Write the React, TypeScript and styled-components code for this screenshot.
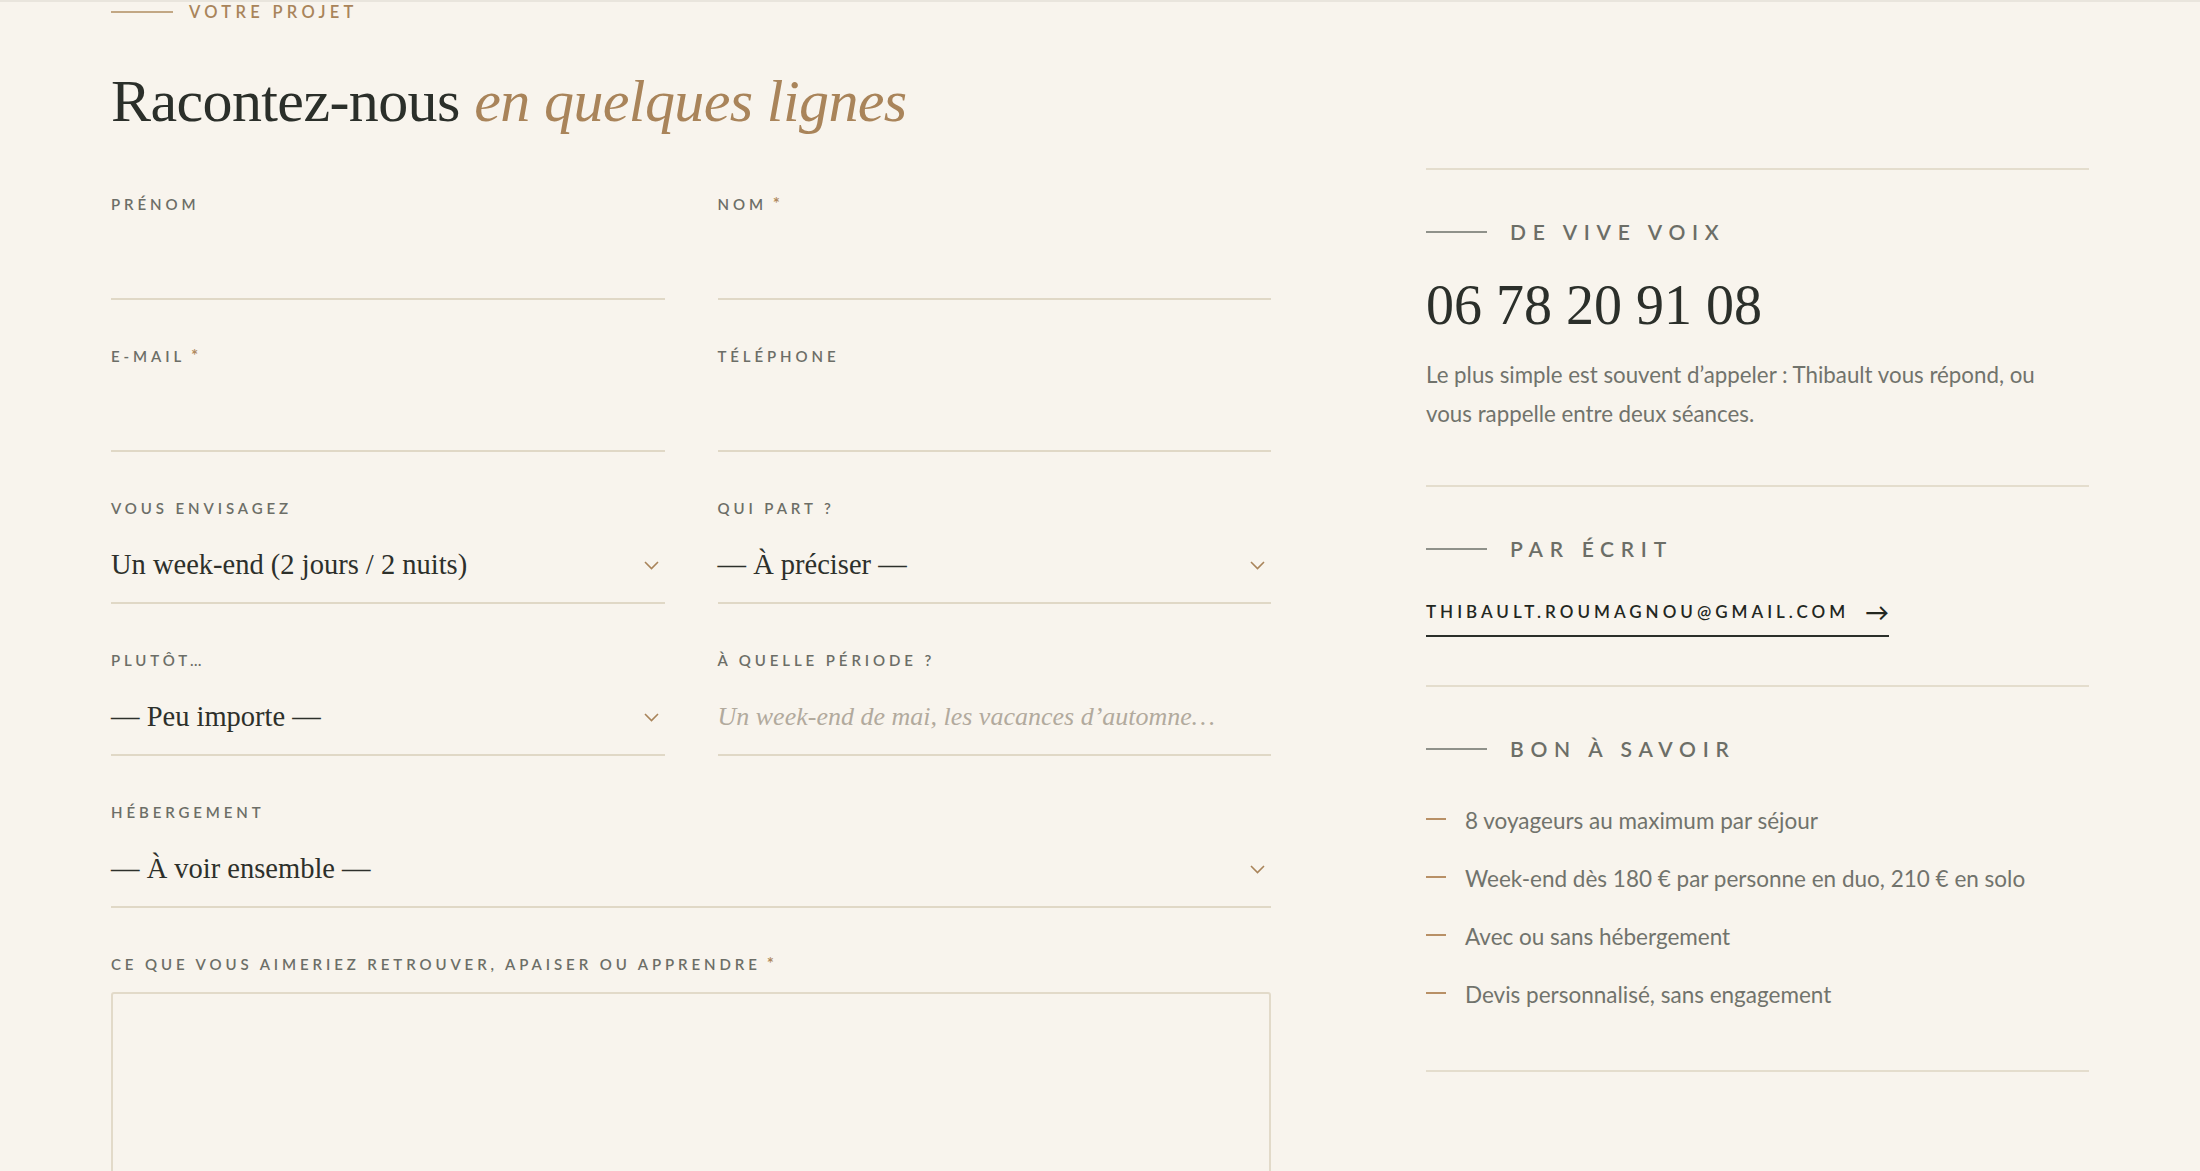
import styled, { createGlobalStyle } from "styled-components";

const serif = `"Liberation Serif", "Times New Roman", serif`;
const sans = `Lato, "Noto Sans", sans-serif`;

const GlobalStyle = createGlobalStyle`
  html, body {
    margin: 0;
    padding: 0;
    background: #f8f4ed;
  }
  * {
    box-sizing: border-box;
  }
`;

const Section = styled.section`
  border-top: 2px solid #e9e5dd;
  padding: 0 111px;
  min-height: 1171px;
  overflow: hidden;
`;

const Layout = styled.div`
  display: grid;
  grid-template-columns: 1160px 663px;
  column-gap: 155px;
  align-items: start;
`;

const Eyebrow = styled.div`
  display: flex;
  align-items: center;
  gap: 16px;
  font-family: ${sans};
  font-size: 16.5px;
  line-height: 20px;
  font-weight: 600;
  letter-spacing: 0.26em;
  text-transform: uppercase;
  color: #a9845a;

  &::before {
    content: "";
    width: 62px;
    height: 1.5px;
    background: #c2a784;
  }
`;

const Heading = styled.h2`
  margin: 43px 0 57px;
  font-family: ${serif};
  font-weight: 400;
  font-size: 60px;
  line-height: 1.2;
  letter-spacing: -0.01em;
  color: #2b2f2a;

  em {
    color: #a9845a;
  }
`;

const FormGrid = styled.form`
  display: grid;
  grid-template-columns: 1fr 1fr;
  column-gap: 53px;
  row-gap: 46px;
`;

const Field = styled.div<{ $wide?: boolean }>`
  display: flex;
  flex-direction: column;
  grid-column: ${(p) => (p.$wide ? "1 / -1" : "auto")};
`;

const Label = styled.label`
  font-family: ${sans};
  font-size: 15px;
  line-height: 20px;
  font-weight: 600;
  letter-spacing: 0.26em;
  text-transform: uppercase;
  color: #6c6e67;

  span {
    color: #b08a5f;
    margin-left: 6px;
    font-size: 17px;
  }
`;

const TextInput = styled.input`
  margin-top: 27px;
  height: 59px;
  padding: 0 0 17px;
  border: none;
  border-bottom: 2px solid #e0d8c6;
  background: transparent;
  font-family: ${serif};
  font-size: 26px;
  line-height: 40px;
  color: #2d302b;
  outline: none;

  &::placeholder {
    font-style: italic;
    color: #b2aa9d;
  }
`;

const SelectBox = styled.div`
  margin-top: 27px;
  height: 59px;
  padding: 0 6px 17px 0;
  border-bottom: 2px solid #e0d8c6;
  display: flex;
  align-items: center;
  justify-content: space-between;
  font-family: ${serif};
  font-size: 28.5px;
  line-height: 40px;
  color: #2d302b;
`;

const TextArea = styled.textarea`
  margin-top: 18px;
  height: 260px;
  border: 2px solid #e2dac9;
  border-radius: 3px;
  background: transparent;
  resize: none;
  outline: none;
`;

const Aside = styled.aside`
  padding-top: 166px;
`;

const Block = styled.div<{ $last?: boolean }>`
  border-top: 2px solid #e4ddcd;
  border-bottom: ${(p) => (p.$last ? "2px solid #e4ddcd" : "none")};
  padding: 48px 0 ${(p) => (p.$last ? "58px" : "48px")};
`;

const BlockTitle = styled.h3`
  margin: 0;
  display: flex;
  align-items: center;
  gap: 23px;
  font-family: ${sans};
  font-size: 21px;
  line-height: 28px;
  font-weight: 600;
  letter-spacing: 0.32em;
  text-transform: uppercase;
  color: #6c6e67;

  &::before {
    content: "";
    width: 61px;
    height: 1.5px;
    background: #8f918a;
  }
`;

const Phone = styled.div`
  margin-top: 27px;
  font-family: ${serif};
  font-size: 56px;
  line-height: 65px;
  color: #2b2f2a;
`;

const Text = styled.p`
  margin: 17px 0 4px;
  max-width: 636px;
  font-family: ${sans};
  font-size: 22.3px;
  line-height: 39px;
  color: #71736c;
`;

const MailLink = styled.a`
  margin-top: 37px;
  display: inline-flex;
  align-items: center;
  gap: 16px;
  padding-bottom: 11px;
  border-bottom: 2px solid #2b2f2a;
  font-family: ${sans};
  font-size: 17px;
  line-height: 24px;
  font-weight: 600;
  letter-spacing: 0.235em;
  color: #23271f;
  text-decoration: none;
`;

const Arrow = styled.span`
  font-size: 24px;
  letter-spacing: 0;
`;

const List = styled.ul`
  margin: 41px 0 0;
  padding: 0;
  list-style: none;
  display: flex;
  flex-direction: column;
  gap: 24px;
`;

const Item = styled.li`
  display: flex;
  align-items: center;
  gap: 19px;
  font-family: ${sans};
  font-size: 22.5px;
  line-height: 34px;
  color: #71736c;

  &::before {
    content: "";
    flex: none;
    width: 20px;
    height: 1.5px;
    margin-top: -4px;
    background: #b89066;
  }
`;

function Chevron() {
  return (
    <svg width="15" height="9" viewBox="0 0 15 9" fill="none">
      <path d="M1 1l6.5 6.5L14 1" stroke="#a9845a" strokeWidth="1.6" />
    </svg>
  );
}

interface SelectProps {
  label: string;
  value: string;
  wide?: boolean;
}

function Select({ label, value, wide }: SelectProps) {
  return (
    <Field $wide={wide}>
      <Label>{label}</Label>
      <SelectBox>
        <span>{value}</span>
        <Chevron />
      </SelectBox>
    </Field>
  );
}

export default function App() {
  return (
    <>
      <GlobalStyle />
      <Section>
        <Layout>
          <div>
            <Eyebrow>Votre projet</Eyebrow>
            <Heading>
              Racontez-nous <em>en quelques lignes</em>
            </Heading>
            <FormGrid>
              <Field>
                <Label>Prénom</Label>
                <TextInput type="text" />
              </Field>
              <Field>
                <Label>
                  Nom<span>*</span>
                </Label>
                <TextInput type="text" />
              </Field>
              <Field>
                <Label>
                  E-mail<span>*</span>
                </Label>
                <TextInput type="email" />
              </Field>
              <Field>
                <Label>Téléphone</Label>
                <TextInput type="tel" />
              </Field>
              <Select label="Vous envisagez" value="Un week-end (2 jours / 2 nuits)" />
              <Select label="Qui part ?" value="— À préciser —" />
              <Select label="Plutôt…" value="— Peu importe —" />
              <Field>
                <Label>À quelle période ?</Label>
                <TextInput type="text" placeholder="Un week-end de mai, les vacances d’automne…" />
              </Field>
              <Select label="Hébergement" value="— À voir ensemble —" wide />
              <Field $wide>
                <Label>
                  Ce que vous aimeriez retrouver, apaiser ou apprendre<span>*</span>
                </Label>
                <TextArea />
              </Field>
            </FormGrid>
          </div>
          <Aside>
            <Block>
              <BlockTitle>De vive voix</BlockTitle>
              <Phone>06 78 20 91 08</Phone>
              <Text>
                Le plus simple est souvent d’appeler : Thibault vous répond, ou vous rappelle entre deux séances.
              </Text>
            </Block>
            <Block>
              <BlockTitle>Par écrit</BlockTitle>
              <MailLink href="#">
                THIBAULT.ROUMAGNOU@GMAIL.COM
                <Arrow>→</Arrow>
              </MailLink>
            </Block>
            <Block $last>
              <BlockTitle>Bon à savoir</BlockTitle>
              <List>
                <Item>8 voyageurs au maximum par séjour</Item>
                <Item>Week-end dès 180 € par personne en duo, 210 € en solo</Item>
                <Item>Avec ou sans hébergement</Item>
                <Item>Devis personnalisé, sans engagement</Item>
              </List>
            </Block>
          </Aside>
        </Layout>
      </Section>
    </>
  );
}
